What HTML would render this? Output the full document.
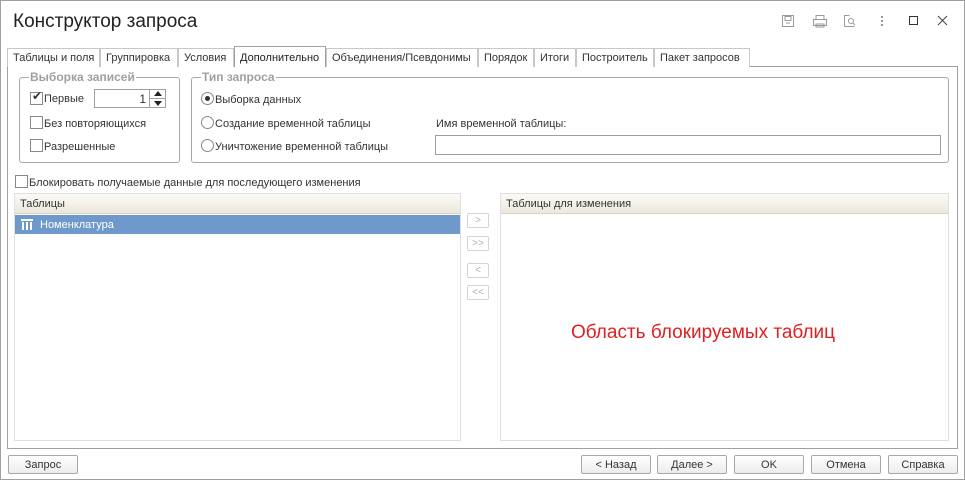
<!DOCTYPE html>
<html><head><meta charset="utf-8"><style>
*{box-sizing:border-box;margin:0;padding:0}
body{width:965px;height:480px;background:#fff;font-family:"Liberation Sans",Arial,sans-serif;font-size:11px;color:#333;position:relative;overflow:hidden}
.a{position:absolute}
.win{left:0;top:0;width:965px;height:480px;border:1px solid #a0a0a0}
.title{left:13px;top:11px;font-size:19px;color:#222}
.tab{top:48px;height:19px;border:1px solid #c8c8c8;border-bottom:none;background:#fff;padding:3px 5px 0;white-space:nowrap}
.panel{left:7px;top:66px;width:951px;height:383px;border:1px solid #a0a0a0}
.grp{border:1px solid #a8a8a8;border-radius:3px}
.lg{background:#fff;color:#a0a0a0;font-weight:bold;font-size:12px;padding:0 1px}
.cb{width:13px;height:13px;border:1px solid #888;background:#fff}
.rb{width:13px;height:13px;border:1px solid #888;border-radius:50%;background:#fff}
.list{border:1px solid #e0e0e0}
.hdr{left:0;top:0;right:0;height:20px;background:linear-gradient(#fbfaf6,#ece8dd);border-bottom:1px solid #d8d4c8;padding:4px 5px}
.btn{top:455px;height:19px;border:1px solid #a8a8a8;border-radius:2px;background:linear-gradient(#fff,#ececec);text-align:center;line-height:18px;font-size:11px}
.sb{left:467px;width:22px;height:15px;border:1px solid #d4d4d4;border-radius:2px;color:#b0b0b0;text-align:center;font-size:10px;line-height:13px}
</style></head><body>
<div class="a win"></div>
<div class="a title">Конструктор запроса</div>
<svg class="a" style="left:780px;top:13px" width="170" height="16" fill="none" stroke="#999" stroke-width="1">
<rect x="2.5" y="2.5" width="11" height="11"/><path d="M5 3.5h6v4H5zM6 10h4"/>
<rect x="33.5" y="6.5" width="13" height="6"/><path d="M36 6V2.5h8V6M36 11h8v3h-8z"/>
<path d="M64.5 13.5V2.5h5M64.5 13.5h10"/><circle cx="71" cy="8" r="2.5"/><path d="M73 10l2 2"/>
<circle cx="102" cy="4" r="1" fill="#777" stroke="none"/><circle cx="102" cy="8" r="1" fill="#777" stroke="none"/><circle cx="102" cy="12" r="1" fill="#777" stroke="none"/>
<rect x="129.5" y="3.5" width="8" height="8" stroke="#333"/>
<path d="M158 3l9 9M167 3l-9 9" stroke="#444"/>
</svg>
<div class="a panel"></div>
<div class="a tab" style="left:7px;width:93px">Таблицы и поля</div>
<div class="a tab" style="left:100px;width:78px">Группировка</div>
<div class="a tab" style="left:178px;width:56px">Условия</div>
<div class="a tab" style="left:234px;width:92px;top:46px;height:21px;border-color:#a0a0a0;padding-top:5px;color:#222">Дополнительно</div>
<div class="a tab" style="left:326px;width:152px">Объединения/Псевдонимы</div>
<div class="a tab" style="left:478px;width:56px">Порядок</div>
<div class="a tab" style="left:534px;width:42px">Итоги</div>
<div class="a tab" style="left:576px;width:78px">Построитель</div>
<div class="a tab" style="left:654px;width:96px">Пакет запросов</div>
<div class="a" style="left:235px;top:66px;width:90px;height:2px;background:#fff"></div>

<div class="a grp" style="left:19px;top:77px;width:161px;height:86px"></div>
<div class="a lg" style="left:29px;top:70px">Выборка записей</div>
<div class="a cb" style="left:30px;top:92px"></div><div class="a" style="left:32px;top:89px;font-size:12px;color:#333">✔</div>
<div class="a" style="left:44px;top:93px">Первые</div>
<div class="a" style="left:94px;top:89px;width:56px;height:19px;border:1px solid #a0a0a0;text-align:right;padding:2px 3px;font-size:12px">1</div>
<div class="a" style="left:150px;top:89px;width:16px;height:19px;border:1px solid #a0a0a0;border-left:none"></div>
<div class="a" style="left:154px;top:91px;width:0;height:0;border:4px solid transparent;border-bottom:5px solid #222;border-top:none"></div>
<div class="a" style="left:150px;top:98px;width:16px;height:1px;background:#a0a0a0"></div>
<div class="a" style="left:154px;top:101px;width:0;height:0;border:4px solid transparent;border-top:5px solid #222;border-bottom:none"></div>
<div class="a cb" style="left:30px;top:116px"></div><div class="a" style="left:44px;top:118px">Без повторяющихся</div>
<div class="a cb" style="left:30px;top:139px"></div><div class="a" style="left:44px;top:141px">Разрешенные</div>

<div class="a grp" style="left:191px;top:77px;width:758px;height:86px"></div>
<div class="a lg" style="left:201px;top:70px">Тип запроса</div>
<div class="a rb" style="left:201px;top:92px"></div><div class="a" style="left:205px;top:96px;width:5px;height:5px;border-radius:50%;background:#333"></div>
<div class="a" style="left:215px;top:94px">Выборка данных</div>
<div class="a rb" style="left:201px;top:116px"></div><div class="a" style="left:215px;top:118px">Создание временной таблицы</div>
<div class="a rb" style="left:201px;top:139px"></div><div class="a" style="left:215px;top:141px">Уничтожение временной таблицы</div>
<div class="a" style="left:436px;top:118px">Имя временной таблицы:</div>
<div class="a" style="left:435px;top:135px;width:506px;height:20px;border:1px solid #a0a0a0"></div>

<div class="a cb" style="left:15px;top:175px"></div>
<div class="a" style="left:29px;top:177px">Блокировать получаемые данные для последующего изменения</div>

<div class="a list" style="left:14px;top:193px;width:447px;height:248px">
<div class="a hdr">Таблицы</div>
<div class="a" style="left:0;top:21px;right:0;height:19px;background:#6f99ca;color:#fff;padding:4px 0 0 25px">Номенклатура</div>
<svg class="a" style="left:6px;top:25px" width="12" height="11"><rect x="0" y="0" width="12" height="2" fill="#fff"/><rect x="1" y="3" width="2" height="8" fill="#fff"/><rect x="5" y="3" width="2" height="8" fill="#fff"/><rect x="9" y="3" width="2" height="8" fill="#fff"/></svg>
</div>
<div class="a sb" style="top:213px">&gt;</div>
<div class="a sb" style="top:236px">&gt;&gt;</div>
<div class="a sb" style="top:263px">&lt;</div>
<div class="a sb" style="top:285px">&lt;&lt;</div>
<div class="a list" style="left:500px;top:193px;width:449px;height:248px">
<div class="a hdr">Таблицы для изменения</div>
<div class="a" style="left:70px;top:128px;font-size:19px;color:#e02020">Область блокируемых таблиц</div>
</div>

<div class="a btn" style="left:8px;width:70px">Запрос</div>
<div class="a btn" style="left:581px;width:70px">&lt; Назад</div>
<div class="a btn" style="left:657px;width:70px">Далее &gt;</div>
<div class="a btn" style="left:734px;width:70px">OK</div>
<div class="a btn" style="left:811px;width:70px">Отмена</div>
<div class="a btn" style="left:888px;width:70px">Справка</div>
</body></html>
